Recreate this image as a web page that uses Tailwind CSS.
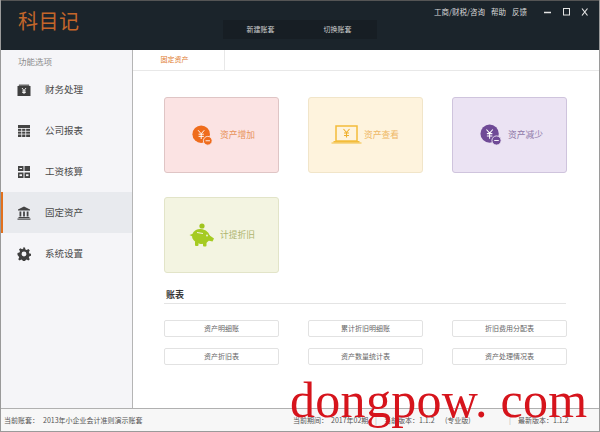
<!DOCTYPE html>
<html lang="zh">
<head>
<meta charset="utf-8">
<script src="https://cdn.jsdelivr.net/npm/@tailwindcss/browser@4"></script>
</head>
<body class="m-0 bg-white">
<div class="relative w-[600px] h-[432px] overflow-hidden flex flex-col bg-white border-x border-b border-[#9a9a9a] font-['Noto_Sans_CJK_SC','Noto_Sans',sans-serif] text-[#555]">
  <!-- header -->
  <header class="h-[50px] shrink-0 bg-[#1b242b] border-t border-[#555] relative flex items-start text-[#d8d8d8]">
    <div class="ml-[17px] mt-[5px] w-[65px] text-[20px] leading-[30px] tracking-[0.5px] text-[#c4662a] whitespace-nowrap">科目记</div>
    <div class="ml-[140px] mt-[19px] w-[154px] h-[19px] bg-[#171e24] flex items-center text-[7px] text-[#cfcfcf]">
      <div class="w-[75px] text-center">新建账套</div>
      <div class="w-[79px] text-center">切换账套</div>
    </div>
    <div class="ml-[57px] mt-[5px] flex items-center text-[7.500px] leading-[12px] whitespace-nowrap">
      <span class="w-[50px]">工商/财税/咨询</span>
      <span class="ml-[7px] w-[14px]">帮助</span>
      <span class="ml-[7px] w-[15px]">反馈</span>
      <svg class="ml-[17px]" width="50" height="12" viewBox="0 0 50 12" fill="none" stroke="#e4e4e4"><path d="M0 6.500h7" stroke-width="1.500"/><rect x="19.500" y="2.500" width="6" height="6.500"/><path d="M38 2.500l5.500 7M43.500 2.500l-5.500 7" stroke-width="1.200"/></svg>
    </div>
  </header>
  <div class="flex-1 flex min-h-0">
    <!-- sidebar -->
    <aside class="w-[132px] shrink-0 bg-[#f5f5f8] border-r border-[#b5b5b5] flex flex-col">
      <div class="h-[19px] pl-[17px] pt-[4px] text-[8.500px] leading-[14px] text-[#8b8b8b]">功能选项</div>
      <div class="h-[41px] flex items-center pl-[16px] text-[9.500px] text-[#4a4a4a]">
        <svg class="w-[14px] h-[14px] shrink-0" viewBox="0 0 14 14"><path d="M2 1.500h10l.5 2.500h-11z" fill="#6b6b6b"/><rect x="0.500" y="3" width="13" height="10" fill="#3f3f3f"/><path d="M5 5l2 2.500 2-2.500M7 7.500v3.500M5.200 8h3.600M5.200 9.500h3.600" stroke="#fff" stroke-width=".9" fill="none"/></svg>
        <span class="ml-[14px]">财务处理</span>
      </div>
      <div class="h-[41px] flex items-center pl-[16px] text-[9.500px] text-[#4a4a4a]">
        <svg class="w-[14px] h-[14px] shrink-0" viewBox="0 0 14 14"><rect x="1" y="1" width="12" height="12" fill="#444"/><path d="M1 4.500h12M1 7.300h12M1 10.100h12M4.700 4v9M8.700 4v9" stroke="#f5f5f8" stroke-width=".8"/></svg>
        <span class="ml-[14px]">公司报表</span>
      </div>
      <div class="h-[41px] flex items-center pl-[16px] text-[9.500px] text-[#4a4a4a]">
        <svg class="w-[14px] h-[14px] shrink-0" viewBox="0 0 14 14" fill="#444"><rect x="1" y="1" width="5.500" height="5"/><rect x="7.500" y="1" width="5.500" height="5"/><rect x="1" y="7.500" width="5.500" height="5.500"/><rect x="7.500" y="7.500" width="5.500" height="5.500"/><rect x="2.500" y="9.300" width="2.500" height="1.800" fill="#f5f5f8"/><rect x="9" y="9.300" width="2.500" height="1.800" fill="#f5f5f8"/><rect x="2.500" y="3" width="2.500" height="1" fill="#f5f5f8"/></svg>
        <span class="ml-[14px]">工资核算</span>
      </div>
      <div class="h-[41px] -ml-px flex items-center pl-[14px] text-[9.500px] text-[#4a4a4a] bg-[#e8eaee] border-l-[3px] border-[#e2711d]">
        <svg class="w-[14px] h-[14px] shrink-0" viewBox="0 0 14 14" fill="#444"><path d="M7 .5l6 3v1H1v-1z"/><rect x="2.500" y="5.500" width="1.800" height="5"/><rect x="6.100" y="5.500" width="1.800" height="5"/><rect x="9.700" y="5.500" width="1.800" height="5"/><rect x="1.500" y="11" width="11" height="1"/><rect x="0.500" y="12.500" width="13" height="1.200"/></svg>
        <span class="ml-[14px]">固定资产</span>
      </div>
      <div class="h-[41px] flex items-center pl-[16px] text-[9.500px] text-[#4a4a4a]">
        <svg class="w-[14px] h-[14px] shrink-0" viewBox="0 0 14 14"><path d="M6 .5h2l.4 1.900 1.300.6 1.700-1 1.400 1.400-1 1.700.6 1.300 1.900.4v2l-1.900.4-.6 1.300 1 1.700-1.400 1.400-1.700-1-1.300.6-.4 1.900H6l-.4-1.900-1.300-.6-1.700 1-1.400-1.400 1-1.700-.6-1.300L.5 8V6l1.900-.4.600-1.300-1-1.700 1.400-1.400 1.700 1 1.300-.6z" fill="#3f3f3f"/><circle cx="7" cy="7" r="2.400" fill="#f5f5f8"/></svg>
        <span class="ml-[14px]">系统设置</span>
      </div>
    </aside>
    <!-- main -->
    <main class="flex-1 min-w-0 flex flex-col">
      <div class="h-[21px] shrink-0 border-b border-[#e8e8e8] flex">
        <div class="w-[92px] pr-[8px] border-r border-[#e8e8e8] text-center text-[7px] leading-[18px] text-[#e07a2e]">固定资产</div>
      </div>
      <div class="pl-[31px] pt-[26px]">
        <div class="grid grid-cols-[115px_115px_115px] gap-x-[29px] gap-y-[24px]">
          <div class="h-[76px] rounded-[3px] bg-[#fbe3e3] border border-[#dfc5c5] flex items-center pl-[27px] text-[8.750px] text-[#e8935a]">
            <svg width="21" height="21" viewBox="0 0 24 24"><circle cx="10.500" cy="10.500" r="10" fill="#ef6c1c"/><path d="M7 6l3.500 4L14 6M10.500 10v6M7.500 10.500h6M7.500 13h6" stroke="#fff" stroke-width="1.100" fill="none"/><circle cx="18" cy="18" r="5" fill="#ef6c1c" stroke="#fbe3e3"/><path d="M15.500 18h5" stroke="#fff"/></svg>
            <span class="ml-[7px]">资产增加</span>
          </div>
          <div class="h-[76px] rounded-[3px] bg-[#fef3dd] border border-[#f1e5c9] flex items-center pl-[22px] text-[8.750px] text-[#eeb765]">
            <svg width="31" height="20" viewBox="0 0 30 20"><rect x="4.500" y="1" width="21" height="15" fill="#fef3dd" stroke="#f3bc3a" stroke-width="1.500"/><path d="M12 4l3 3.500L18 4M15 7.500v5M12.500 8h5M12.500 10.500h5" stroke="#efb02c" stroke-width="1.100" fill="none"/><path d="M0 17.500h30v1H0z" fill="#f3bc3a"/><path d="M2 16h26v1.500H2z" fill="#f3bc3a"/></svg>
            <span class="ml-[2px]">资产查看</span>
          </div>
          <div class="h-[76px] rounded-[3px] bg-[#ebe3f3] border border-[#cfc4dd] flex items-center pl-[27px] text-[8.750px] text-[#8e78a8]">
            <svg width="22" height="22" viewBox="0 0 24 24"><circle cx="10.500" cy="10.500" r="10" fill="#6f4a96"/><path d="M7 6l3.500 4L14 6M10.500 10v6M7.500 10.500h6M7.500 13h6" stroke="#fff" stroke-width="1.100" fill="none"/><circle cx="18" cy="18" r="5" fill="#6f4a96" stroke="#ebe3f3"/><path d="M15.500 18h5" stroke="#fff"/></svg>
            <span class="ml-[6px]">资产减少</span>
          </div>
          <div class="h-[76px] rounded-[3px] bg-[#f3f4e1] border border-[#e2e4c8] flex items-center pl-[24px] text-[8.750px] text-[#aeb56f]">
            <svg width="25" height="24" viewBox="0 0 25 24"><circle cx="13" cy="3" r="2.600" fill="#a0c41f"/><ellipse cx="12" cy="13.500" rx="9" ry="7.500" fill="#a5cb22" transform="rotate(12 12 13.500)"/><path d="M0.500 12l4-1.500v3.500z" fill="#a5cb22"/><rect x="6" y="18" width="3.500" height="5" fill="#a5cb22" rx="1"/><rect x="14" y="18.500" width="3.500" height="5" fill="#a5cb22" rx="1"/><path d="M20 12l5 3.500-1.500 3-4.500-1z" fill="#a5cb22"/><path d="M8 9.500l6 1" stroke="#f3f4e1"/><circle cx="18" cy="12.500" r=".9" fill="#f3f4e1"/></svg>
            <span class="ml-[6px]">计提折旧</span>
          </div>
        </div>
        <div class="w-[402px] mt-[15px] pb-[2px] border-b border-[#e4e4e4] text-[9px] leading-[13px] font-bold text-[#333] pl-[2px]">账表</div>
        <div class="mt-[16px] grid grid-cols-[115px_115px_115px] gap-x-[29px] gap-y-[11px] text-[7px] text-[#666]">
          <div class="h-[17px] rounded-[2px] border border-[#e2e2e2] flex items-center justify-center">资产明细账</div>
          <div class="h-[17px] rounded-[2px] border border-[#e2e2e2] flex items-center justify-center">累计折旧明细账</div>
          <div class="h-[17px] rounded-[2px] border border-[#e2e2e2] flex items-center justify-center">折旧费用分配表</div>
          <div class="h-[17px] rounded-[2px] border border-[#e2e2e2] flex items-center justify-center">资产折旧表</div>
          <div class="h-[17px] rounded-[2px] border border-[#e2e2e2] flex items-center justify-center">资产数量统计表</div>
          <div class="h-[17px] rounded-[2px] border border-[#e2e2e2] flex items-center justify-center">资产处理情况表</div>
        </div>
      </div>
    </main>
  </div>
  <!-- status -->
  <footer class="h-[23px] shrink-0 border-t border-[#b0b0b0] bg-[#f7f7f7] flex items-center text-[7px] text-[#555] whitespace-nowrap">
    <span class="ml-[3px] w-[39px]">当前账套：</span>
    <span class="w-[250px]">2013年小企业会计准则演示账套</span>
    <span class="w-[38px]">当前期间：</span>
    <span class="w-[44px]">2017年02期</span>
    <span class="w-[9px] text-[#aaa]">|</span>
    <span class="w-[61px]">当前版本：1.1.2</span>
    <span class="w-[64px]">(专业版)</span>
    <span class="w-[9px] text-[#aaa]">|</span>
    <span>最新版本：1.1.2</span>
  </footer>
  <!-- watermark -->
  <div class="absolute left-[289px] top-[370px] text-[50px] leading-[60px] tracking-[0.300px] text-[#d6141c] font-['Liberation_Serif',serif] whitespace-nowrap">dongpow. com</div>
</div>
</body>
</html>
